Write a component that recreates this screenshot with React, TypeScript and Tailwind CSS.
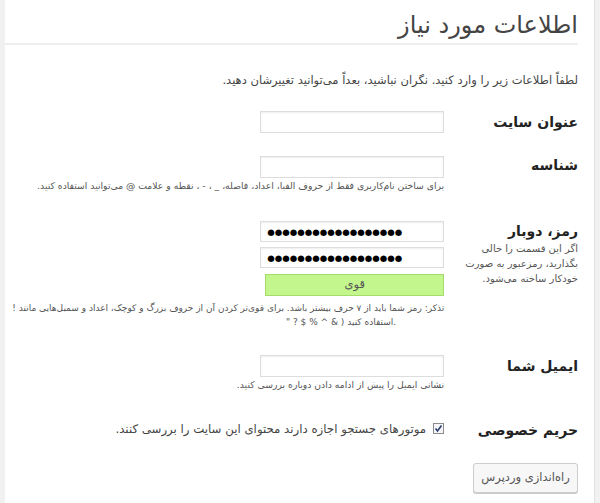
export default function App() {
  return (
    <div
      dir="rtl"
      className="h-[503px] w-[600px] overflow-hidden bg-[#f1f1f1] font-['DejaVu_Sans',sans-serif] text-[#444]"
    >
      <div className="mr-[5px] h-full w-[590px] border-r border-[#e2e2e2] bg-white pr-[16px]">
        <h1 className="border-b-2 border-[#eeeeee] pt-[10px] pb-[3px] text-[24px] font-normal leading-[30px] text-[#444]">
          اطلاعات مورد نیاز
        </h1>

        <p className="mt-[25px] text-[11.5px] leading-[20px] text-[#444]">
          لطفاً اطلاعات زیر را وارد کنید. نگران نباشید، بعداً می‌توانید تغییرشان دهید.
        </p>

        {/* site title */}
        <div className="mt-[21px] flex">
          <label className="w-[135px] text-[14px] font-semibold leading-[22px] text-[#222]">
            عنوان سایت
          </label>
          <div className="w-[443px]">
            <input
              className="block h-[22px] w-[184px] border border-[#dddddd] bg-white shadow-[inset_0_1px_2px_rgba(0,0,0,0.07)] outline-none"
              readOnly
            />
          </div>
        </div>

        {/* username */}
        <div className="mt-[23px] flex">
          <label className="w-[135px] text-[14px] font-semibold leading-[18px] text-[#222]">
            شناسه
          </label>
          <div className="w-[443px]">
            <input
              className="block h-[22px] w-[184px] border border-[#dddddd] bg-white shadow-[inset_0_1px_2px_rgba(0,0,0,0.07)] outline-none"
              readOnly
            />
            <p className="text-[9.25px] leading-[16px] text-[#555]">
              برای ساختن نام‌کاربری فقط از حروف الفبا، اعداد، فاصله، _ ، - ، نقطه و علامت @ می‌توانید استفاده کنید.
            </p>
          </div>
        </div>

        {/* password */}
        <div className="mt-[27px] flex">
          <div className="w-[135px]">
            <label className="block text-[14px] font-semibold leading-[20px] text-[#222]">
              رمز، دوبار
            </label>
            <p className="text-[10px] leading-[15px] text-[#555]">
              اگر این قسمت را خالی
              <br />
              بگذارید، رمزعبور به صورت
              <br />
              خودکار ساخته می‌شود.
            </p>
          </div>
          <div className="w-[443px]">
            <input
              dir="ltr"
              value="●●●●●●●●●●●●●●●●●●"
              readOnly
              className="block h-[21px] w-[184px] border border-[#dddddd] bg-white px-[6px] text-[8.6px] text-black shadow-[inset_0_1px_2px_rgba(0,0,0,0.07)] outline-none"
            />
            <input
              dir="ltr"
              value="●●●●●●●●●●●●●●●●●●"
              readOnly
              className="mt-[5px] block h-[21px] w-[184px] border border-[#dddddd] bg-white px-[6px] text-[8.6px] text-black shadow-[inset_0_1px_2px_rgba(0,0,0,0.07)] outline-none"
            />
            <div className="mt-[6px] flex h-[22px] w-[179px] items-center justify-center border border-[#a6dc6c] bg-[#c3f68c] text-[11.5px] text-[#555]">
              قوی
            </div>
            <p className="mt-[5px] whitespace-nowrap text-[9px] leading-[14px] text-[#555]">
              تذکر: رمز شما باید از ۷ حرف بیشتر باشد. برای قوی‌تر کردن آن از حروف بزرگ و کوچک، اعداد و سمبل‌هایی مانند !
            </p>
            <p dir="ltr" className="pr-[48px] text-right text-[9px] leading-[14px] text-[#555]">
              " ? $ % ^ & ) استفاده کنید.&lrm;
            </p>
          </div>
        </div>

        {/* email */}
        <div className="mt-[26px] flex">
          <label className="w-[135px] text-[14px] font-semibold leading-[22px] text-[#222]">
            ایمیل شما
          </label>
          <div className="w-[443px]">
            <input
              className="block h-[22px] w-[184px] border border-[#dddddd] bg-white shadow-[inset_0_1px_2px_rgba(0,0,0,0.07)] outline-none"
              readOnly
            />
            <p className="text-[9.25px] leading-[16px] text-[#555]">
              نشانی ایمیل را پیش از ادامه دادن دوباره بررسی کنید.
            </p>
          </div>
        </div>

        {/* privacy */}
        <div className="mt-[23px] flex">
          <label className="w-[135px] pt-[3px] text-[14px] font-semibold leading-[22px] text-[#222]">
            حریم خصوصی
          </label>
          <div className="flex w-[443px] items-center gap-[7px] text-[11.75px] leading-[20px] text-[#444]">
            <span className="flex h-[11px] w-[11px] items-center justify-center border border-[#8c8c8c] bg-[#f4f6fb]">
              <svg width="9" height="9" viewBox="0 0 9 9">
                <path d="M1.5 4.5 L3.5 7 L7.5 1.5" fill="none" stroke="#2c3e6e" strokeWidth="1.6" />
              </svg>
            </span>
            <span>موتورهای جستجو اجازه دارند محتوای این سایت را بررسی کنند.</span>
          </div>
        </div>

        <button className="mt-[22px] h-[30px] w-[105px] rounded-[3px] border border-[#cccccc] bg-[#f7f7f7] text-[11.5px] text-[#555] shadow-[0_1px_0_#ccc]">
          راه‌اندازی وردپرس
        </button>
      </div>
    </div>
  );
}
